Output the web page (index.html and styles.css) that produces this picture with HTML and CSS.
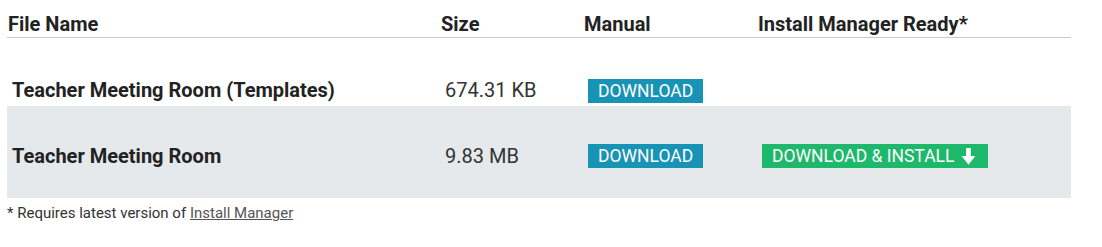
FILE: index.html
```html
<!DOCTYPE html>
<html>
<head>
<meta charset="utf-8">
<link rel="stylesheet" href="styles.css">
</head>
<body>
<div class="wrap">
  <table class="files">
    <thead>
      <tr>
        <th class="c1">File Name</th>
        <th class="c2">Size</th>
        <th class="c3">Manual</th>
        <th class="c4">Install Manager Ready*</th>
      </tr>
    </thead>
    <tbody>
      <tr class="r1">
        <td class="name">Teacher Meeting Room (Templates)</td>
        <td class="size">674.31 KB</td>
        <td><a class="btn blue">DOWNLOAD</a></td>
        <td></td>
      </tr>
      <tr class="r2">
        <td class="name">Teacher Meeting Room</td>
        <td class="size">9.83 MB</td>
        <td><a class="btn blue">DOWNLOAD</a></td>
        <td><a class="btn green">DOWNLOAD &amp; INSTALL <svg class="arrow" viewBox="0 0 14 16" width="15" height="17"><path d="M4.8 0h4.4v7.6h4.3L7 15.8 0.5 7.6h4.3z" fill="#fff"/></svg></a></td>
      </tr>
    </tbody>
  </table>
  <p class="note">* Requires latest version of <a class="link">Install Manager</a></p>
</div>
</body>
</html>
```

FILE: styles.css
```css
html, body { margin: 0; padding: 0; background: #fff; }
body { font-family: Roboto, "Liberation Sans", sans-serif; color: #222; }
.wrap { padding: 0 31px 0 7px; }
.files { width: 1064px; border-collapse: collapse; }
.files th {
  text-align: left;
  font-size: 20px;
  font-weight: 700;
  color: #222;
  padding: 16px 0 5px 1px;
  border-bottom: 1px solid #c8c8c8;
  line-height: 16px;
}
.c1 { width: 432px; }
.c2 { width: 142px; }
.c3 { width: 173px; }
.files td { padding: 0 0 0 5px; vertical-align: middle; font-size: 20px; line-height: 24px; }
.files td.name { padding-left: 5px; }
.r1 td { height: 68px; padding-top: 36px; padding-bottom: 0; box-sizing: border-box; }
.r2 { background: #e5e9ec; }
.r2 td { height: 92px; padding-top: 8px; box-sizing: border-box; }
.name { font-weight: 700; color: #222; }
.size { color: #333; }
.btn {
  display: inline-flex;
  align-items: center;
  height: 24px;
  padding: 0 10px;
  font-size: 17.5px;
  color: #fff;
  line-height: 24px;
  vertical-align: middle;
}
.blue { background: #1793b5; }
.green { background: #1db86b; padding-right: 12px; }
.arrow { margin-left: 7px; }
.note { margin: 6px 0 0 0; font-size: 15px; color: #333; }
.link { color: #555; text-decoration: underline; }
```
